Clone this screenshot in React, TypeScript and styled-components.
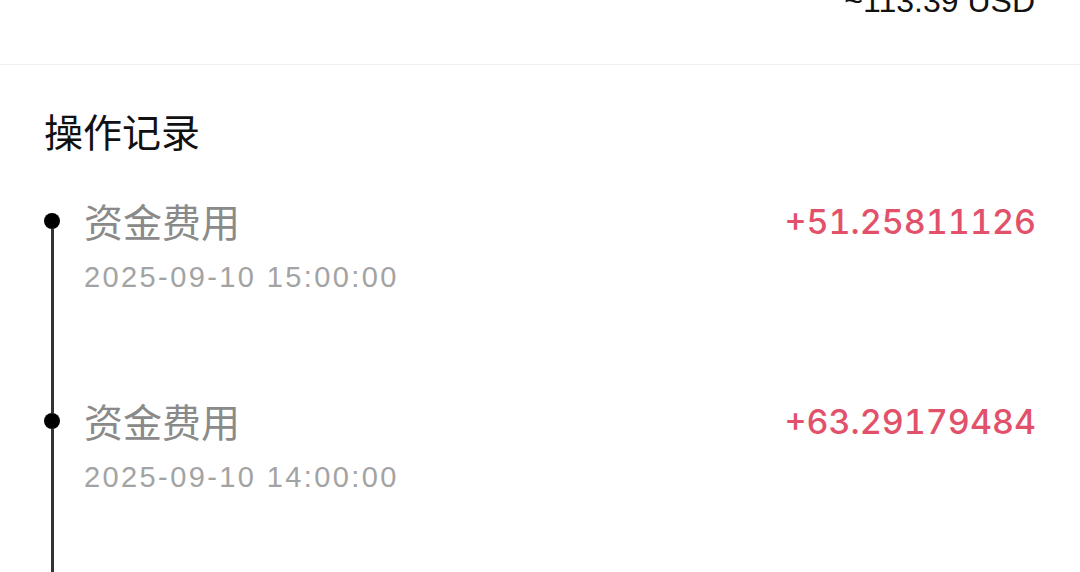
import React from "react";
import styled, { createGlobalStyle } from "styled-components";

const GlobalStyle = createGlobalStyle`
  html, body {
    margin: 0;
    padding: 0;
    background: #ffffff;
    overflow: hidden;
  }
  body {
    font-family: "Liberation Sans", "Noto Sans CJK SC", sans-serif;
  }
`;

const records = [
  { title: "资金费用", time: "2025-09-10 15:00:00", amount: "+51.25811126" },
  { title: "资金费用", time: "2025-09-10 14:00:00", amount: "+63.29179484" },
];

const Page = styled.div`
  width: 1080px;
  height: 572px;
  overflow: hidden;
  background: #ffffff;
`;

const Header = styled.div`
  height: 64px;
  display: flex;
  justify-content: flex-end;
  align-items: flex-start;
  padding-right: 45px;
  border-bottom: 1px solid #f0f0f0;
`;

const Equivalent = styled.div`
  margin-top: -15px;
  font-family: "Liberation Sans", sans-serif;
  font-size: 32px;
  line-height: 32px;
  color: #111111;
`;

const Section = styled.section`
  padding: 0 44px;
`;

const SectionTitle = styled.h2`
  margin: 42px 0 45px;
  font-family: "Noto Sans CJK SC", sans-serif;
  font-size: 39px;
  line-height: 46px;
  font-weight: 400;
  color: #111111;
`;

const Timeline = styled.div`
  display: flex;
  flex-direction: column;
`;

const Item = styled.div`
  display: flex;
  align-items: stretch;
`;

const Rail = styled.div`
  width: 16px;
  display: flex;
  flex-direction: column;
  align-items: center;
  flex-shrink: 0;
`;

const Segment = styled.div<{ $hidden?: boolean; $grow?: boolean }>`
  width: 3px;
  height: ${({ $grow }) => ($grow ? "auto" : "15px")};
  flex: ${({ $grow }) => ($grow ? 1 : "none")};
  background: ${({ $hidden }) => ($hidden ? "transparent" : "#333333")};
`;

const Dot = styled.div`
  width: 16px;
  height: 16px;
  border-radius: 50%;
  background: #000000;
  flex-shrink: 0;
`;

const Body = styled.div`
  flex: 1;
  display: flex;
  justify-content: space-between;
  align-items: flex-start;
  margin-left: 24px;
  padding-bottom: 101px;
`;

const Info = styled.div`
  display: flex;
  flex-direction: column;
  gap: 8px;
`;

const ItemTitle = styled.div`
  margin-top: -3px;
  font-family: "Noto Sans CJK SC", sans-serif;
  font-size: 39px;
  line-height: 50px;
  color: #8a8a8a;
`;

const Time = styled.div`
  margin-top: 4px;
  font-family: "Liberation Sans", sans-serif;
  font-size: 29px;
  line-height: 40px;
  letter-spacing: 2.4px;
  color: #a3a3a3;
`;

const Amount = styled.div`
  margin-top: 1px;
  font-family: Inter, "Liberation Sans", sans-serif;
  font-size: 34px;
  line-height: 46px;
  font-weight: 500;
  font-variant-numeric: tabular-nums;
  letter-spacing: 0;
  color: #e2516a;
`;

const App: React.FC = () => {
  return (
    <Page>
      <GlobalStyle />
      <Header>
        <Equivalent>~113.39 USD</Equivalent>
      </Header>
      <Section>
        <SectionTitle>操作记录</SectionTitle>
        <Timeline>
          {records.map((r, i) => (
            <Item key={i}>
              <Rail>
                <Segment $hidden={i === 0} />
                <Dot />
                <Segment $grow />
              </Rail>
              <Body>
                <Info>
                  <ItemTitle>{r.title}</ItemTitle>
                  <Time>{r.time}</Time>
                </Info>
                <Amount>{r.amount}</Amount>
              </Body>
            </Item>
          ))}
        </Timeline>
      </Section>
    </Page>
  );
};

export default App;
